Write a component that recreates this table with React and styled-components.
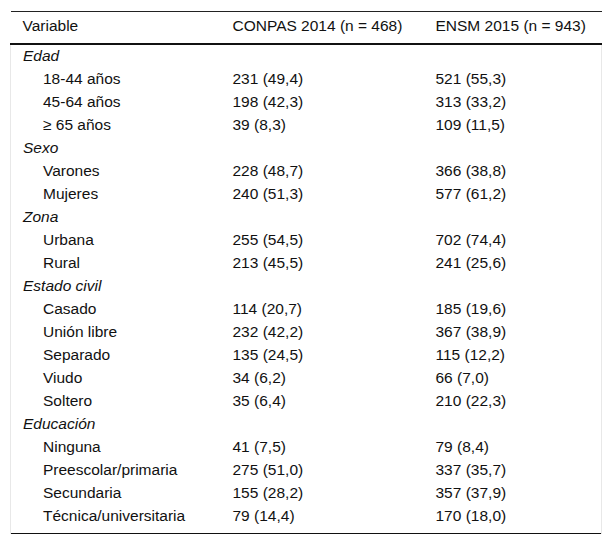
import * as React from "react";
import styled, { createGlobalStyle } from "styled-components";

const rows = [
  { group: "Edad" },
  { label: "18-44 años", a: "231 (49,4)", b: "521 (55,3)" },
  { label: "45-64 años", a: "198 (42,3)", b: "313 (33,2)" },
  { label: "≥ 65 años", a: "39 (8,3)", b: "109 (11,5)" },
  { group: "Sexo" },
  { label: "Varones", a: "228 (48,7)", b: "366 (38,8)" },
  { label: "Mujeres", a: "240 (51,3)", b: "577 (61,2)" },
  { group: "Zona" },
  { label: "Urbana", a: "255 (54,5)", b: "702 (74,4)" },
  { label: "Rural", a: "213 (45,5)", b: "241 (25,6)" },
  { group: "Estado civil" },
  { label: "Casado", a: "114 (20,7)", b: "185 (19,6)" },
  { label: "Unión libre", a: "232 (42,2)", b: "367 (38,9)" },
  { label: "Separado", a: "135 (24,5)", b: "115 (12,2)" },
  { label: "Viudo", a: "34 (6,2)", b: "66 (7,0)" },
  { label: "Soltero", a: "35 (6,4)", b: "210 (22,3)" },
  { group: "Educación" },
  { label: "Ninguna", a: "41 (7,5)", b: "79 (8,4)" },
  { label: "Preescolar/primaria", a: "275 (51,0)", b: "337 (35,7)" },
  { label: "Secundaria", a: "155 (28,2)", b: "357 (37,9)" },
  { label: "Técnica/universitaria", a: "79 (14,4)", b: "170 (18,0)" }
];

const App = () => {
  return (
    <Page>
      <GlobalStyle />
      <Table>
        <colgroup>
          <col style={{ width: "210px" }} />
          <col style={{ width: "203px" }} />
          <col />
        </colgroup>
        <thead>
          <tr>
            <HeadCell>Variable</HeadCell>
            <HeadCell>CONPAS 2014 (n = 468)</HeadCell>
            <HeadCell>ENSM 2015 (n = 943)</HeadCell>
          </tr>
        </thead>
        <Body>
          {rows.map((r, i) =>
            r.group ? (
              <Row key={i}>
                <GroupCell colSpan={3}>{r.group}</GroupCell>
              </Row>
            ) : (
              <Row key={i}>
                <Cell indent>{r.label}</Cell>
                <Cell>{r.a}</Cell>
                <Cell>{r.b}</Cell>
              </Row>
            )
          )}
          <Spacer>
            <td colSpan={3} />
          </Spacer>
        </Body>
      </Table>
    </Page>
  );
};

const GlobalStyle = createGlobalStyle`
  body {
    margin: 0;
    background: #fff;
  }
`;

const Page = styled.div`
  padding: 11px 10px 0 10px;
  font-family: "Liberation Sans", Arial, sans-serif;
  font-size: 15.5px;
  color: #111;
`;

const Table = styled.table`
  width: 592px;
  border-collapse: collapse;
  table-layout: fixed;
  border-top: 1px solid #222;
  border-bottom: 1px solid #111;
`;

const HeadCell = styled.th`
  text-align: left;
  font-weight: normal;
  height: 28px;
  padding: 0 0 3px 12px;
  border-bottom: 2px solid #111;
  vertical-align: middle;
  white-space: nowrap;
`;

const Body = styled.tbody`
  border-left: 1px solid #e8e8e8;
  border-right: 1px solid #e8e8e8;
`;

const Row = styled.tr`
  height: 23px;
`;

const Cell = styled.td`
  padding: 0 0 0 ${p => (p.indent ? "32px" : "12px")};
  white-space: nowrap;
  vertical-align: middle;
`;

const GroupCell = styled.td`
  padding: 0 0 0 12px;
  font-style: italic;
  vertical-align: middle;
`;

const Spacer = styled.tr`
  height: 6px;
`;

export default App;
